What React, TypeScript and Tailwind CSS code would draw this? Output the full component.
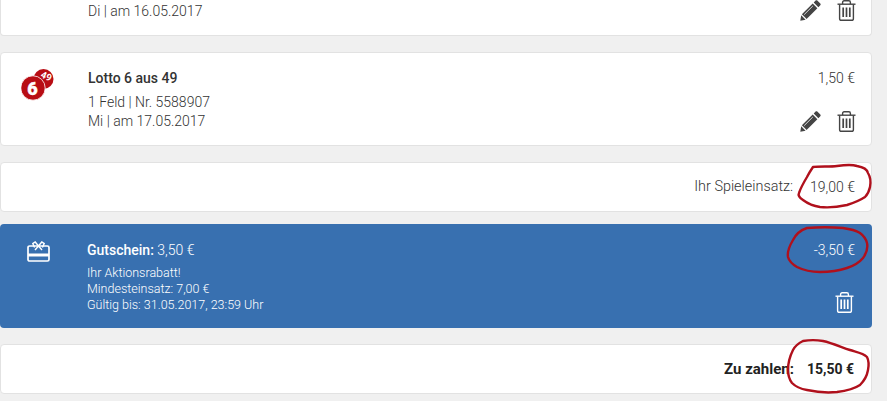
const PencilIcon = () => (
  <svg width="21" height="21" viewBox="0 0 21 21" className="text-[#444444]" fill="currentColor">
    <path d="M15.6 0.6c.5-.5 1.2-.5 1.7 0l3 3c.5.5.5 1.2 0 1.7l-1.9 1.9-4.7-4.7 1.9-1.9z" />
    <path d="M12.7 3.5l4.7 4.7L6.6 19l-4.7-4.7L12.7 3.5z" />
    <path d="M1.2 15.3l4.4 4.4-5.3 1 .9-5.4z" />
    <path d="M4.2 14.6l8.6-8.6" stroke="#ffffff" strokeWidth="0.8" fill="none" />
  </svg>
);

const TrashIcon = ({ className }: { className: string }) => (
  <svg width="19" height="21" viewBox="0 0 19 21" className={className} fill="none" stroke="currentColor">
    <path d="M0.5 4.2h18" strokeWidth="1.4" />
    <path d="M5.6 4V2.4c0-1 .7-1.6 1.5-1.6h4.8c.8 0 1.5.6 1.5 1.6V4" strokeWidth="1.4" />
    <path d="M2.6 4.4v14c0 1.2.8 1.9 1.8 1.9h10.2c1 0 1.8-.7 1.8-1.9v-14" strokeWidth="1.4" />
    <path d="M6.2 7.5v9.5M9.5 7.5v9.5M12.8 7.5v9.5" strokeWidth="1.7" />
  </svg>
);

const LottoLogo = () => (
  <svg width="34" height="34" viewBox="0 0 34 34">
    <circle cx="22.5" cy="10" r="10" fill="#b80d14" />
    <text x="25" y="10.5" fontSize="9.5" fontWeight="700" fill="#ffffff" textAnchor="middle" transform="rotate(24 25 8)" fontFamily="Roboto, sans-serif">49</text>
    <circle cx="12" cy="19" r="12.2" fill="#b80d14" stroke="#ffffff" strokeWidth="0.8" />
    <text x="11.5" y="25.5" fontSize="18" fontWeight="900" fill="#ffffff" stroke="#ffffff" strokeWidth="0.4" textAnchor="middle" fontFamily="Roboto, sans-serif">6</text>
  </svg>
);

const GiftIcon = () => (
  <svg width="23" height="21" viewBox="0 0 23 21" fill="none" stroke="#ffffff" strokeWidth="1.7">
    <rect x="1" y="5" width="21" height="15" rx="1.6" />
    <path d="M1 14h21" strokeWidth="3" />
    <path d="M11.5 5L8.2 1 5.8 2.6 7.6 6.5M11.5 5l3.3-4 2.4 1.6-1.8 3.9M11.5 5L8 9M11.5 5L15 9" strokeWidth="1.4" />
  </svg>
);

const Actions = () => (
  <div className="flex justify-end items-center gap-4">
    <PencilIcon />
    <TrashIcon className="text-[#444444]" />
  </div>
);

const TicketCard = ({ title, line1, line2, price }: { title: string; line1: string; line2: string; price: string }) => (
  <div className="mt-[16px] flex h-[94px] rounded border border-[#e2e2e2] bg-white pl-[20px] pr-[15px]">
    <div className="w-[67px] pt-[16px]">
      <LottoLogo />
    </div>
    <div className="flex-1 pt-[16px] text-[14px] leading-[19px] font-light text-[#333333]">
      <div className="font-medium mb-[5px]">{title}</div>
      <div>{line1}</div>
      <div>{line2}</div>
    </div>
    <div className="flex flex-col justify-between pt-[16px] pb-[13px] text-right text-[14px] leading-[19px] font-light text-[#333333]">
      <div className="pr-px">{price}</div>
      <Actions />
    </div>
  </div>
);

export default function App() {
  return (
    <div className="relative h-[401px] w-[887px] overflow-hidden bg-[#f0f0f0] pr-[15px] font-['Roboto',sans-serif]">
      {/* card scrolled off the top, only its last line is visible */}
      <div className="flex h-[36px] justify-between rounded-b border border-t-0 border-[#e2e2e2] bg-white pl-[87px] pr-[15px] pt-[2px] text-[14px] leading-[19px] font-light text-[#333333]">
        <div>Di | am 16.05.2017</div>
        <div className="-mt-[2px]">
          <Actions />
        </div>
      </div>

      <TicketCard title="Lotto 6 aus 49" line1="1 Feld | Nr. 5588907" line2="Mi | am 17.05.2017" price="1,50 €" />

      <div className="mt-[16px] flex h-[50px] items-center justify-end gap-[17px] rounded border border-[#e2e2e2] bg-white pr-[16px] text-[14px] font-light text-[#333333]">
        <span className="text-[14.4px]">Ihr Spieleinsatz:</span>
        <span>19,00 €</span>
      </div>

      <div className="mt-[12px] flex h-[104px] rounded bg-[#3870b0] pl-[27px] pr-[17px] text-white">
        <div className="w-[60px] pt-[17px]">
          <GiftIcon />
        </div>
        <div className="flex-1 pt-[17px] font-light">
          <div className="text-[14px] leading-[19px] mb-[5px]">
            <span className="font-medium">Gutschein:</span> 3,50 €
          </div>
          <div className="text-[12.5px] leading-[16px]">
            <div>Ihr Aktionsrabatt!</div>
            <div>Mindesteinsatz: 7,00 €</div>
            <div>Gültig bis: 31.05.2017, 23:59 Uhr</div>
          </div>
        </div>
        <div className="flex flex-col justify-between pt-[17px] pb-[15px] text-right text-[14px] leading-[19px] font-light">
          <div>-3,50 €</div>
          <div className="flex justify-end pr-px">
            <TrashIcon className="text-white" />
          </div>
        </div>
      </div>

      <div className="mt-[16px] flex h-[50px] items-center justify-end gap-[13px] rounded border border-[#e2e2e2] bg-white pr-[17px] text-[14px] font-bold text-[#222222]">
        <span className="text-[15px]">Zu zahlen:</span>
        <span>15,50 €</span>
      </div>

      {/* hand drawn circles on top of the screenshot */}
      <svg className="absolute left-0 top-0" width="887" height="401" fill="none" stroke="#b0101c" strokeWidth="2.4" strokeLinecap="round" strokeLinejoin="round">
        <path d="M813 167C820 166 830 167 837 166S851 164 857 166C863 167 867 169 868 173C871 178 871 182 870 187C869 192 868 194 865 197C859 201 853 203 847 205C838 207 829 208 820 207C813 206 807 203 803 200C800 198 798 195 799 193C801 187 804 182 807 177C809 173 811 170 813 167Z" />
        <path d="M807 228C818 227 832 227 843 228C850 229 855 230 860 233C864 236 866 239 867 243C868 248 866 254 863 258C859 263 853 266 847 268C838 271 829 272 820 272C811 272 803 270 797 267C792 264 789 261 788 257C787 251 790 245 793 240C796 234 801 230 807 228Z" />
        <path d="M803 341C809 340 817 340 823 341C832 343 841 347 850 350C856 352 863 353 867 357C869 361 869 365 868 370C867 376 864 381 860 385C854 389 845 391 837 392C827 393 816 392 807 390C801 389 796 387 792 383C789 379 788 375 788 370C788 363 790 356 793 350C795 346 799 343 803 341Z" />
      </svg>
    </div>
  );
}
